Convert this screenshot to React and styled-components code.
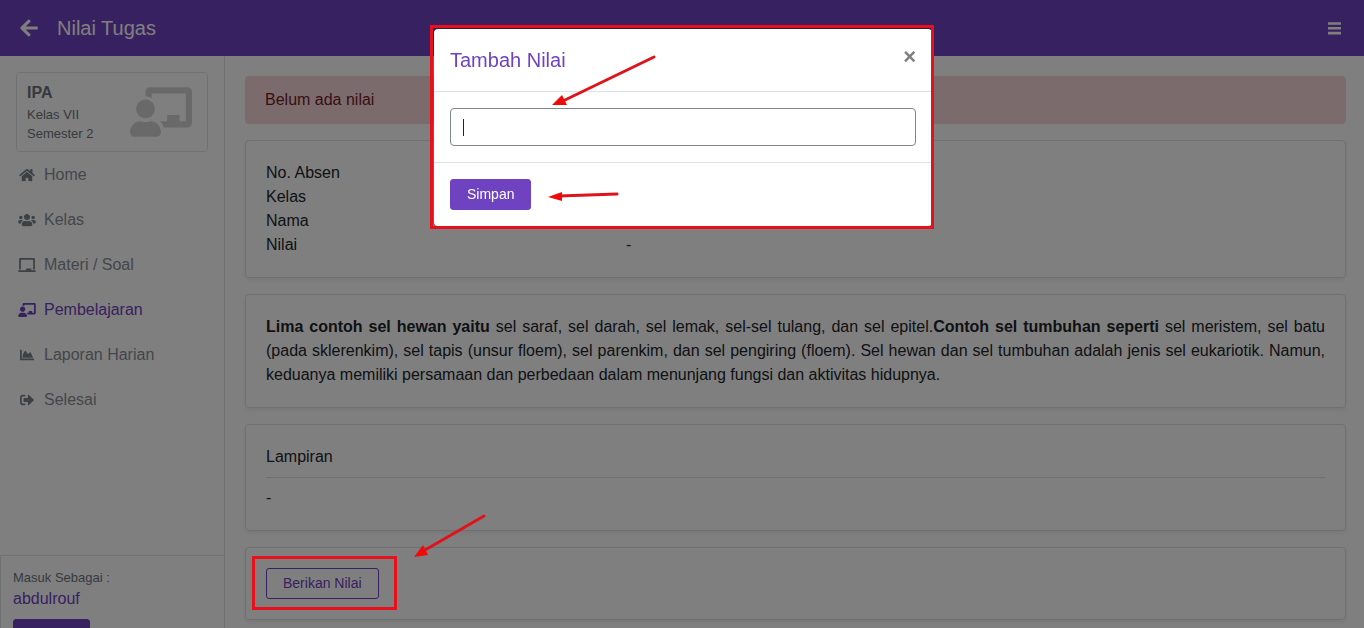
import React from 'react'
import styled, { createGlobalStyle } from 'styled-components'
import {
  FaArrowLeft,
  FaChalkboard,
  FaChalkboardTeacher,
  FaChartArea,
  FaHome,
  FaSignOutAlt,
  FaUsers,
} from 'react-icons/fa'

const GlobalStyle = createGlobalStyle`
  * {
    box-sizing: border-box;
  }
  body {
    margin: 0;
    font-family: 'Liberation Sans', Arial, sans-serif;
    font-size: 16px;
    line-height: 24px;
    color: #212529;
    background-color: #fff;
  }
  button, input {
    font-family: inherit;
  }
`

const Page = styled.div`
  height: 100vh;
  overflow: hidden;
`

const Navbar = styled.header`
  display: flex;
  align-items: center;
  gap: 18px;
  height: 56px;
  padding: 0 23px 0 19px;
  background-color: #6f42c1;
  color: #fff;

  h1 {
    flex: 1;
    margin: 0;
    font-size: 20px;
    font-weight: normal;
    line-height: 30px;
  }
`

const IconButton = styled.button`
  display: flex;
  padding: 0;
  border: 0;
  background: none;
  color: inherit;
  font-size: 20px;
`

const Columns = styled.div`
  display: flex;
  align-items: flex-start;
`

const Sidebar = styled.aside`
  display: flex;
  flex-direction: column;
  flex: 0 0 225px;
  height: 100vh;
  border-right: 1px solid #dee2e6;
`

const Subject = styled.div`
  display: flex;
  align-items: center;
  justify-content: space-between;
  height: 80px;
  margin: 16px 16px 0;
  padding: 0 15px 0 10px;
  border: 1px solid #dee2e6;
  border-radius: 4px;
  color: #6c757d;
  font-size: 13px;
  line-height: 19px;

  strong {
    display: block;
    font-size: 16px;
    line-height: 24px;
  }
  svg {
    width: 62px;
    height: 50px;
    color: #d3d3d3;
  }
`

const Menu = styled.nav`
  display: flex;
  flex-direction: column;
`

const MenuLink = styled.a`
  display: flex;
  align-items: center;
  gap: 8px;
  height: 45px;
  padding: 0 18px;
  color: ${props => (props.$active ? '#6f42c1' : '#868e96')};
  text-decoration: none;

  svg {
    width: 18px;
    height: 14px;
    color: ${props => (props.$active ? '#6f42c1' : '#7b8288')};
  }
`

const Account = styled.div`
  display: flex;
  flex-direction: column;
  align-items: flex-start;
  margin-top: auto;
  padding: 12px 12px 34px;
  border: 1px solid #dee2e6;
  border-width: 1px 0 0 1px;

  small {
    color: #6c757d;
    font-size: 13px;
    line-height: 19px;
  }
  a {
    margin-bottom: 8px;
    color: #6f42c1;
    text-decoration: none;
  }
  button {
    width: 77px;
  }
`

const Button = styled.button`
  height: 31px;
  padding: 0 16px;
  border: 1px solid #6f42c1;
  border-radius: 3px;
  background-color: ${props => (props.$outline ? 'transparent' : '#6f42c1')};
  color: ${props => (props.$outline ? '#6f42c1' : '#fff')};
  font-size: 14px;
  line-height: 21px;
`

const Content = styled.main`
  display: flex;
  flex-direction: column;
  flex: 1;
  gap: 16px;
  min-width: 0;
  padding: 20px 18px 20px 20px;
`

const Alert = styled.div`
  padding: 12px 20px;
  border-radius: 4px;
  background-color: #f8d7da;
  color: #721c24;
`

const Card = styled.section`
  padding: 20px;
  border: 1px solid #dfdfdf;
  border-radius: 4px;
  box-shadow: 0 2px 4px rgba(0, 0, 0, 0.075);

  p {
    margin: 0;
    text-align: justify;
  }
  hr {
    margin: 8px 0;
    border: 0;
    border-top: 1px solid #dfdfdf;
  }
`

const Detail = styled.dl`
  display: grid;
  grid-template-columns: 34% 1fr;
  margin: 0;

  dd {
    margin: 0;
  }
`

const Backdrop = styled.div`
  position: fixed;
  inset: 0;
  z-index: 10;
  padding: 28px 0 0 2px;
  background-color: rgba(0, 0, 0, 0.5);
`

const Dialog = styled.form`
  position: relative;
  max-width: 500px;
  margin: 0 auto;
  border: 1px solid rgba(0, 0, 0, 0.2);
  border-radius: 5px;
  background-color: #fff;
  background-clip: padding-box;
`

const DialogHeader = styled.div`
  display: flex;
  align-items: flex-start;
  justify-content: space-between;
  padding: 16px;

  h2 {
    margin: 0;
    color: #6f42c1;
    font-size: 20px;
    font-weight: normal;
    line-height: 30px;
  }
`

const CloseButton = styled.button`
  padding: 0;
  border: 0;
  background: none;
  color: #7f7f7f;
  font-size: 22px;
  font-weight: bold;
  line-height: 24px;
`

const DialogBody = styled.div`
  padding: 16px;
  border: 1px solid #dee2e6;
  border-width: 1px 0;
`

const DialogFooter = styled.div`
  display: flex;
  padding: 16px;
`

const Field = styled.div`
  position: relative;

  /* steady text cursor */
  &::after {
    content: '';
    position: absolute;
    top: 11px;
    left: 13px;
    width: 1px;
    height: 17px;
    background-color: #212529;
  }
`

const ScoreInput = styled.input`
  display: block;
  width: 100%;
  height: 38px;
  padding: 6px 12px;
  border: 1px solid #80868b;
  border-radius: 4px;
  outline: 0;
  color: #495057;
  caret-color: transparent;
  font-size: 16px;
`

const Anchor = styled.div`
  position: relative;
  width: fit-content;
`

const Highlight = styled.div`
  position: absolute;
  z-index: 20;
  inset: ${props => props.$inset};
  border: 3px solid #e8101a;
  pointer-events: none;
`

const ArrowSvg = styled.svg`
  position: absolute;
  z-index: 20;
  left: ${props => props.$left}px;
  top: ${props => props.$top}px;
  pointer-events: none;
`

function Arrow({ left, top, width, height, line, head }) {
  return (
    <ArrowSvg $left={left} $top={top} width={width} height={height} aria-hidden="true">
      <path d={line} stroke="#e0121b" strokeWidth="3" strokeLinecap="round" />
      <path d={head} fill="#f00a0a" />
    </ArrowSvg>
  )
}

function BarsIcon() {
  return (
    <svg width="13" height="13" viewBox="0 0 13 13" aria-hidden="true">
      <path d="M0 1.5H13M0 6.3H13M0 11.1H13" stroke="currentColor" strokeWidth="2.6" />
    </svg>
  )
}

const menu = [
  { label: 'Home', icon: FaHome },
  { label: 'Kelas', icon: FaUsers },
  { label: 'Materi / Soal', icon: FaChalkboard },
  { label: 'Pembelajaran', icon: FaChalkboardTeacher, active: true },
  { label: 'Laporan Harian', icon: FaChartArea },
  { label: 'Selesai', icon: FaSignOutAlt },
]

export default function App() {
  return (
    <Page>
      <GlobalStyle />
      <Navbar>
        <IconButton type="button" aria-label="Kembali"><FaArrowLeft /></IconButton>
        <h1>Nilai Tugas</h1>
        <IconButton type="button" aria-label="Menu"><BarsIcon /></IconButton>
      </Navbar>

      <Columns>
        <Sidebar>
          <Subject>
            <div>
              <strong>IPA</strong>
              <div>Kelas VII</div>
              <div>Semester 2</div>
            </div>
            <FaChalkboardTeacher />
          </Subject>
          <Menu>
            {menu.map(({ label, icon: Icon, active }) => (
              <MenuLink key={label} href="#" $active={active}>
                <Icon />
                {label}
              </MenuLink>
            ))}
          </Menu>
          <Account>
            <small>Masuk Sebagai :</small>
            <a href="#">abdulrouf</a>
            <Button type="button" aria-label="Keluar" />
          </Account>
        </Sidebar>

        <Content>
          <Alert>Belum ada nilai</Alert>
          <Card>
            <Detail>
              <dt>No. Absen</dt>
              <dd />
              <dt>Kelas</dt>
              <dd />
              <dt>Nama</dt>
              <dd />
              <dt>Nilai</dt>
              <dd>-</dd>
            </Detail>
          </Card>
          <Card>
            <p>
              <b>Lima contoh sel hewan yaitu</b> sel saraf, sel darah, sel lemak, sel-sel tulang, dan sel epitel.
              <b>Contoh sel tumbuhan seperti</b> sel meristem, sel batu (pada sklerenkim), sel tapis (unsur floem),
              sel parenkim, dan sel pengiring (floem). Sel hewan dan sel tumbuhan adalah jenis sel eukariotik. Namun,
              keduanya memiliki persamaan dan perbedaan dalam menunjang fungsi dan aktivitas hidupnya.
            </p>
          </Card>
          <Card>
            <div>Lampiran</div>
            <hr />
            <div>-</div>
          </Card>
          <Card>
            <Anchor>
              <Button type="button" $outline>Berikan Nilai</Button>
              <Highlight $inset="-12px -18px -11px -14px" />
              <Arrow
                left={146}
                top={-58}
                width={78}
                height={52}
                line="M72 6L13 40"
                head="M2 47L11 35L16 45Z"
              />
            </Anchor>
          </Card>
        </Content>
      </Columns>

      <Backdrop>
        <Dialog role="dialog" aria-labelledby="dialog-title" onSubmit={e => e.preventDefault()}>
          <DialogHeader>
            <h2 id="dialog-title">Tambah Nilai</h2>
            <CloseButton type="button" aria-label="Tutup">×</CloseButton>
          </DialogHeader>
          <DialogBody>
            <Field>
              <ScoreInput type="text" aria-label="Nilai" autoFocus />
            </Field>
          </DialogBody>
          <DialogFooter>
            <Button type="submit">Simpan</Button>
          </DialogFooter>
          <Highlight $inset="-4px -2px -3px -4px" />
          <Arrow
            left={116}
            top={24}
            width={110}
            height={56}
            line="M104 4L15 47"
            head="M2 52L12 42L17 52Z"
          />
          <Arrow
            left={112}
            top={158}
            width={76}
            height={18}
            line="M71 7L13 9"
            head="M2 10L16 5L16 14Z"
          />
        </Dialog>
      </Backdrop>
    </Page>
  )
}
